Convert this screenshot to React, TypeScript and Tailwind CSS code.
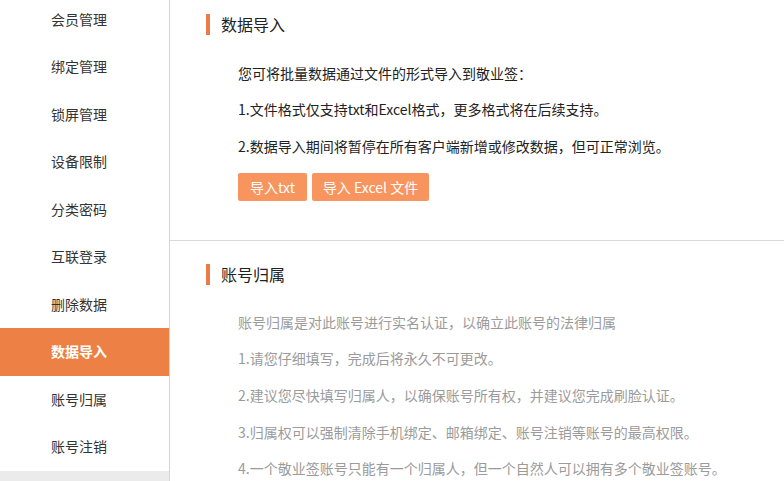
import React from "react";

const menu = [
  "会员管理",
  "绑定管理",
  "锁屏管理",
  "设备限制",
  "分类密码",
  "互联登录",
  "删除数据",
  "数据导入",
  "账号归属",
  "账号注销",
];

const font = {
  fontFamily: '"Noto Sans CJK SC", "Noto Sans", sans-serif',
};

function Title({ text }: { text: string }) {
  return (
    <div className="flex items-center h-[21px]">
      <div className="w-1 h-[21px] bg-[#ec7c44]" />
      <div className="ml-[11px] text-[16px] leading-[21px] text-[#222]">{text}</div>
    </div>
  );
}

export default function App() {
  return (
    <div className="w-[784px] h-[481px] overflow-hidden bg-white flex" style={font}>
      <div className="w-[170px] shrink-0 border-r border-[#d6d6d6] flex flex-col bg-[#ebebeb]">
        <div className="-mt-[4.5px] bg-white">
          {menu.map((m) => {
            const active = m === "数据导入";
            return (
              <div
                key={m}
                className={
                  "h-[47.5px] flex items-center pl-[51px] text-[14px] " +
                  (active ? "bg-[#ec8045] text-white font-bold" : "text-[#333]")
                }
              >
                {m}
              </div>
            );
          })}
        </div>
      </div>
      <div className="flex-1 flex flex-col">
        <div className="pt-[14px] pl-[36px] pb-[39px] border-b border-[#d9d9d9]">
          <Title text="数据导入" />
          <div className="pl-[32px] mt-[19.5px] text-[14px] leading-[36.5px] text-[#222]">
            <p>您可将批量数据通过文件的形式导入到敬业签：</p>
            <p>1.文件格式仅支持txt和Excel格式，更多格式将在后续支持。</p>
            <p>2.数据导入期间将暂停在所有客户端新增或修改数据，但可正常浏览。</p>
            <div className="flex gap-[5px] mt-[9px]">
              <button className="h-[28px] w-[69px] rounded-[2px] bg-[#f8955e] text-white text-[14px] leading-[28px]">
                导入txt
              </button>
              <button className="h-[28px] w-[117px] rounded-[2px] bg-[#f8955e] text-white text-[14px] leading-[28px]">
                导入 Excel 文件
              </button>
            </div>
          </div>
        </div>
        <div className="pt-[23px] pl-[36px]">
          <Title text="账号归属" />
          <div className="pl-[32px] mt-[18.5px] text-[14px] leading-[36.7px] text-[#9b9b9b]">
            <p>账号归属是对此账号进行实名认证，以确立此账号的法律归属</p>
            <p>1.请您仔细填写，完成后将永久不可更改。</p>
            <p>2.建议您尽快填写归属人，以确保账号所有权，并建议您完成刷脸认证。</p>
            <p>3.归属权可以强制清除手机绑定、邮箱绑定、账号注销等账号的最高权限。</p>
            <p>4.一个敬业签账号只能有一个归属人，但一个自然人可以拥有多个敬业签账号。</p>
          </div>
        </div>
      </div>
    </div>
  );
}
